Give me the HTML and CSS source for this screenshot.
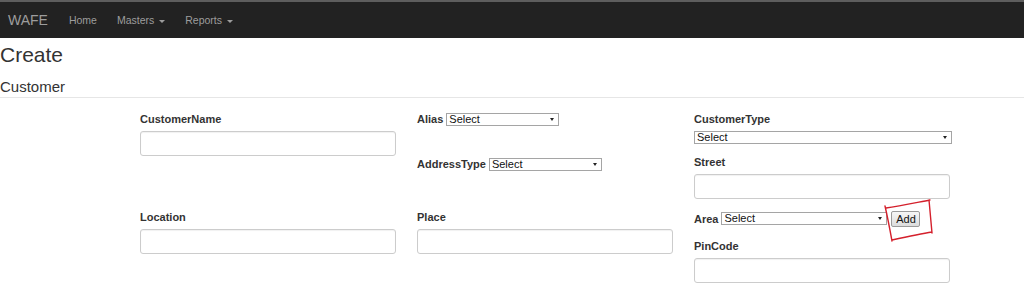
FILE: index.html
```html
<!DOCTYPE html>
<html lang="en">
<head>
    <meta charset="UTF-8">
    <meta name="viewport" content="width=device-width, initial-scale=1.0">
    <title>WAFE - Create Customer</title>
    <link rel="stylesheet" href="styles.css">
</head>
<body>
    <div class="navbar">
        <span class="brand">WAFE</span>
        <span class="nav-link">Home</span>
        <span class="nav-link">Masters <span class="caret"></span></span>
        <span class="nav-link">Reports <span class="caret"></span></span>
    </div>

    <h2 class="page-title">Create</h2>
    <h4 class="section-title">Customer</h4>
    <hr class="divider">

    <form class="customer-form">
        <!-- row 1 -->
        <div class="column">
            <div class="form-group">
                <label>CustomerName</label>
                <input type="text" class="form-control">
            </div>
        </div>
        <div class="column">
            <div class="form-group inline-group">
                <label>Alias</label>
                <span class="select-wrap alias-select"><select><option>Select</option></select></span>
            </div>
            <div class="form-group inline-group">
                <label>AddressType</label>
                <span class="select-wrap address-select"><select><option>Select</option></select></span>
            </div>
        </div>
        <div class="column">
            <div class="form-group">
                <label>CustomerType</label>
                <span class="select-wrap type-select"><select><option>Select</option></select></span>
            </div>
            <div class="form-group">
                <label>Street</label>
                <input type="text" class="form-control">
            </div>
        </div>

        <!-- row 2 -->
        <div class="column">
            <div class="form-group">
                <label>Location</label>
                <input type="text" class="form-control">
            </div>
        </div>
        <div class="column">
            <div class="form-group">
                <label>Place</label>
                <input type="text" class="form-control">
            </div>
        </div>
        <div class="column">
            <div class="form-group area-group">
                <label>Area</label>
                <span class="select-wrap area-select"><select><option>Select</option></select></span>
                <button type="button" class="add-btn">Add</button>
                <svg class="scribble" width="60" height="46" viewBox="0 0 60 46">
                    <path d="M2 9 C15 7, 30 4, 46 1 M45 1 C46 12, 47 23, 48 34 M48 33 C36 35, 22 38, 8 41 M8 42 C6 31, 4 20, 1 7" fill="none" stroke="#d4202c" stroke-width="1.4" stroke-linecap="round"/>
                </svg>
            </div>
            <div class="form-group">
                <label>PinCode</label>
                <input type="text" class="form-control">
            </div>
        </div>
    </form>
</body>
</html>
```

FILE: styles.css
```css
body {
    font-family: "Liberation Sans", Arial, sans-serif;
    margin: 0;
    padding: 0;
    color: #333;
    background-color: #fff;
}

.navbar {
    display: flex;
    align-items: center;
    height: 36px;
    background-color: #222;
    border-top: 2px solid #5e5e5e;
}

.brand {
    font-size: 14px;
    color: #9d9d9d;
    padding: 0 21px 0 8px;
}

.nav-link {
    font-size: 10.5px;
    color: #9d9d9d;
    margin-right: 20px;
}

.caret {
    display: inline-block;
    width: 0;
    height: 0;
    margin-left: 2px;
    vertical-align: middle;
    border-top: 3px solid #9d9d9d;
    border-left: 3px solid transparent;
    border-right: 3px solid transparent;
}

.page-title {
    font-size: 21px;
    font-weight: normal;
    line-height: 24px;
    margin: 5px 0 0 0;
    color: #333;
}

.section-title {
    font-size: 15px;
    font-weight: normal;
    line-height: 18px;
    margin: 11px 0 0 0;
    color: #333;
}

.divider {
    margin: 1px 0 0 0;
    border: 0;
    border-top: 1px solid #e6e6e6;
}

.customer-form {
    display: grid;
    grid-template-columns: 277px 277px 277px;
    align-items: start;
    padding: 14px 0 0 140px;
}

.form-group {
    margin-bottom: 11px;
    position: relative;
}

.form-group label {
    display: block;
    font-size: 11px;
    font-weight: bold;
    line-height: 14px;
    margin-bottom: 5px;
    color: #333;
}

.inline-group {
    display: flex;
    align-items: center;
    height: 14px;
    margin-bottom: 31px;
}

.inline-group label,
.area-group label {
    margin: 0 3px 0 0;
}

.form-control {
    display: block;
    box-sizing: border-box;
    width: 256px;
    height: 25px;
    border: 1px solid #ccc;
    border-radius: 3px;
    box-shadow: inset 0 1px 1px rgba(0, 0, 0, 0.06);
    padding: 4px 8px;
}

.select-wrap {
    display: block;
    position: relative;
    height: 13px;
}

.select-wrap select {
    display: block;
    appearance: none;
    -webkit-appearance: none;
    box-sizing: border-box;
    width: 100%;
    height: 13px;
    margin: 0;
    padding: 0 0 0 2px;
    font-family: "Liberation Sans", Arial, sans-serif;
    font-size: 11px;
    line-height: 11px;
    color: #111;
    background: #fff;
    border: 1px solid #a5a5a5;
    border-radius: 0;
}

.select-wrap::after {
    content: "";
    position: absolute;
    right: 5px;
    top: 5px;
    border-top: 3px solid #222;
    border-left: 2px solid transparent;
    border-right: 2px solid transparent;
}

.alias-select {
    width: 113px;
}

.address-select {
    width: 113px;
}

.type-select {
    width: 258px;
}

.area-group {
    display: flex;
    align-items: center;
    height: 17px;
    margin-bottom: 12px;
}

.area-select {
    width: 166px;
}

.add-btn {
    box-sizing: border-box;
    height: 16px;
    width: 29px;
    margin-left: 4px;
    padding: 0;
    font-family: "Liberation Sans", Arial, sans-serif;
    font-size: 11px;
    color: #111;
    background: linear-gradient(#f6f6f6, #dcdcdc);
    border: 1px solid #9a9a9a;
    border-radius: 2px;
}

.scribble {
    position: absolute;
    left: 190px;
    top: -11px;
}
```
